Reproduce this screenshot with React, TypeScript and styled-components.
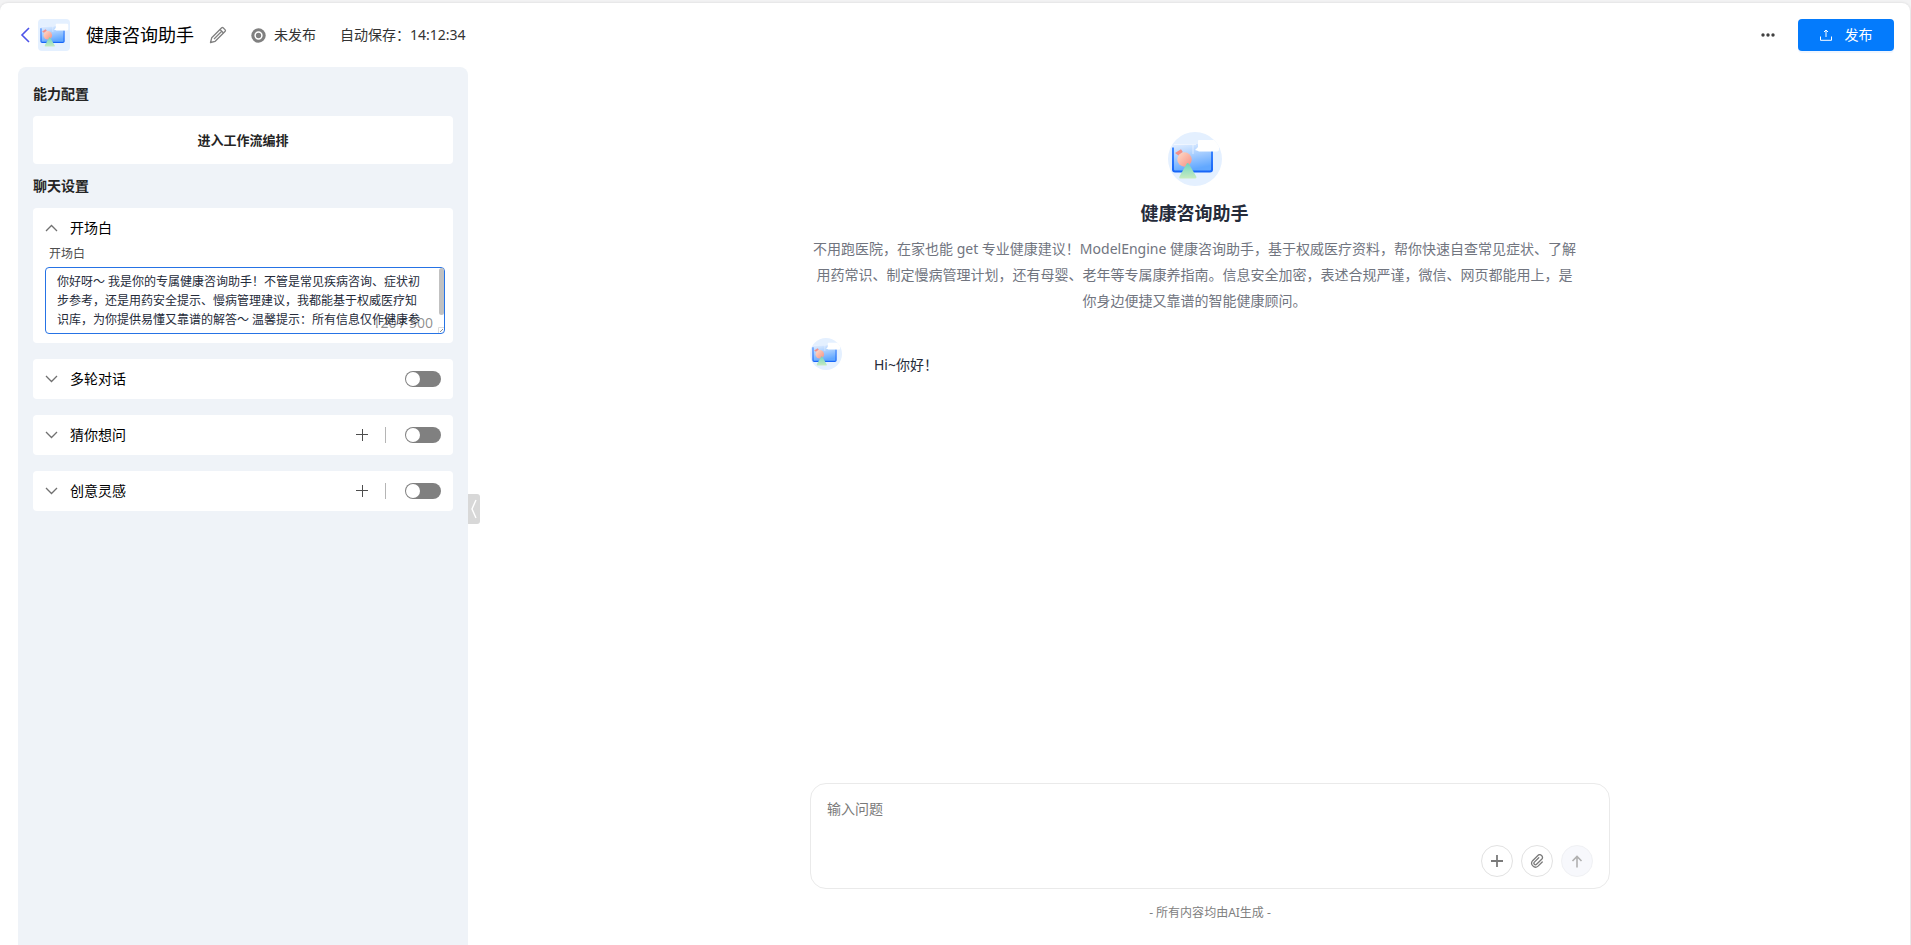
import React, { useState } from 'react';
import styled, { createGlobalStyle } from 'styled-components';

const GlobalStyle = createGlobalStyle`
  *, *::before, *::after { box-sizing: border-box; }
  html, body, #root { height: 100%; }
  body {
    margin: 0;
    background: #f3f3f4;
    color: #000;
    font-family: "Noto Sans", "Noto Sans CJK SC", sans-serif;
    font-size: 14px;
    line-height: 20px;
  }
  button, textarea, input { font: inherit; color: inherit; }
  button { cursor: pointer; border: 0; background: none; padding: 0; }
  h1, h2, p { margin: 0; }
`;

const Page = styled.div`
  min-height: 100%;
  padding: 3px 1px 0 0;
  display: flex;
`;

const Shell = styled.div`
  flex: 1;
  min-width: 0;
  display: flex;
  flex-direction: column;
  background: #fff;
  border-radius: 8px 8px 0 0;
  box-shadow: 0 0 3px rgba(0, 0, 0, 0.12);
`;

const Header = styled.header`
  height: 64px;
  padding: 0 16px 0 20px;
  display: flex;
  align-items: center;
`;

const IconButton = styled.button`
  display: flex;
  align-items: center;
  justify-content: center;
  flex: none;
`;

const BackButton = styled(IconButton)`
  width: 10px;
  height: 32px;
  margin-right: 8px;
`;

const Avatar = styled.span<{ $size: number; $round?: boolean }>`
  width: ${(p) => p.$size}px;
  height: ${(p) => p.$size}px;
  flex: none;
  display: block;
  overflow: hidden;
  border-radius: ${(p) => (p.$round ? '50%' : '4px')};
  svg { display: block; width: 100%; height: 100%; }
`;

const AppName = styled.h1`
  margin: 0 15px 0 16px;
  font-size: 18px;
  line-height: 24px;
  font-weight: 400;
`;

const Status = styled.span`
  margin-left: 24px;
  display: flex;
  align-items: center;
  gap: 8px;
  color: #333;
`;

const SavedAt = styled.span`
  margin-left: 24px;
  color: #333;
`;

const HeaderActions = styled.div`
  margin-left: auto;
  display: flex;
  align-items: center;
  gap: 22px;
`;

const PublishButton = styled.button`
  width: 96px;
  height: 32px;
  border-radius: 4px;
  background: #047bfc;
  color: #fff;
  box-shadow: 0 2px 0 rgba(5, 95, 255, 0.06);
  display: flex;
  align-items: center;
  justify-content: center;
  gap: 13px;
`;

const Body = styled.div`
  flex: 1;
  display: flex;
  padding-left: 18px;
`;

const Sidebar = styled.aside`
  position: relative;
  width: 450px;
  flex: none;
  padding: 17px 15px;
  border-radius: 8px 8px 0 0;
  background: #eff3f8;
`;

const SectionTitle = styled.h2`
  margin-bottom: 12px;
  font-size: 14px;
  line-height: 20px;
  font-weight: 600;
  color: #252525;
`;

const WorkflowButton = styled.button`
  width: 100%;
  height: 48px;
  margin-bottom: 12px;
  border-radius: 4px;
  background: #fff;
  font-size: 13px;
  font-weight: 600;
  color: #252525;
`;

const SettingList = styled.div`
  display: flex;
  flex-direction: column;
  gap: 16px;
`;

const Card = styled.section<{ $open?: boolean }>`
  padding: 0 12px ${(p) => (p.$open ? 9 : 0)}px;
  border-radius: 4px;
  background: #fff;
`;

const CardHead = styled.div`
  height: 40px;
  display: flex;
  align-items: center;
`;

const CardToggle = styled.button`
  display: flex;
  align-items: center;
  gap: 12px;
  margin-right: auto;
`;

const AddButton = styled(IconButton)`
  width: 12px;
  height: 12px;
`;

const Divider = styled.span`
  width: 1px;
  height: 16px;
  margin: 0 19px 0 17px;
  background: #b5b5b5;
`;

const Switch = styled.input`
  appearance: none;
  width: 36px;
  height: 16px;
  margin: 0;
  border-radius: 8px;
  background: #808080;
  cursor: pointer;
  display: flex;
  align-items: center;
  padding: 0 1px;
  &::before {
    content: '';
    width: 14px;
    height: 14px;
    border-radius: 50%;
    background: #fff;
  }
  &:checked { background: #047bfc; justify-content: flex-end; }
`;

const FieldLabel = styled.label`
  display: block;
  padding-left: 4px;
  margin-bottom: 8px;
  font-size: 12px;
  line-height: 11px;
  color: #4d4d4d;
`;

const GreetingBox = styled.div`
  position: relative;
  width: 400px;
  height: 67px;
  padding-bottom: 3px;
  border: 1px solid #2673e5;
  border-radius: 4px;
  background: #fff;
`;

const GreetingArea = styled.textarea`
  display: block;
  width: 100%;
  height: 100%;
  padding: 4px 22px 0 11px;
  border: 0;
  outline: none;
  resize: none;
  overflow: hidden;
  background: none;
  font-size: 12px;
  line-height: 19px;
  color: #252b3a;
`;

const ScrollThumb = styled.span`
  position: absolute;
  top: 0;
  right: 0;
  width: 5px;
  height: 47px;
  border-radius: 3px;
  background: #c1c1c1;
`;

const ResizeGrip = styled.svg`
  position: absolute;
  right: 0;
  bottom: 0;
`;

const CharCount = styled.span`
  position: absolute;
  right: 11px;
  bottom: 0;
  color: rgba(0, 0, 0, 0.45);
  pointer-events: none;
`;

const CollapseHandle = styled.button`
  position: absolute;
  left: 100%;
  top: 427px;
  width: 12px;
  height: 30px;
  border-radius: 0 3px 3px 0;
  background: #d8d8d8;
  display: flex;
  align-items: center;
  justify-content: center;
`;

const Chat = styled.main`
  flex: 1;
  min-width: 0;
  padding: 65px 0 22px 42px;
  display: flex;
  flex-direction: column;
  align-items: center;
`;

const Conversation = styled.div`
  flex: 1;
  width: 100%;
  max-width: 800px;
  padding-right: 31px;
`;

const Intro = styled.div`
  display: flex;
  flex-direction: column;
  align-items: center;
  text-align: center;
`;

const IntroTitle = styled.h2`
  margin: 15px 0 11px;
  font-size: 18px;
  line-height: 24px;
  font-weight: 700;
  color: #252b3a;
`;

const IntroText = styled.p`
  line-height: 26px;
  color: #71757f;
`;

const Message = styled.div`
  margin-top: 24px;
  display: flex;
  align-items: flex-start;
  gap: 32px;
`;

const Bubble = styled.p`
  padding-top: 17px;
  color: #252b3a;
`;

const Composer = styled.form`
  width: 100%;
  max-width: 800px;
  height: 106px;
  padding: 15px 16px 11px;
  border: 1px solid #eaeaea;
  border-radius: 16px;
  display: flex;
  flex-direction: column;
  justify-content: space-between;
`;

const Question = styled.textarea`
  width: 100%;
  height: 40px;
  padding: 0;
  border: 0;
  outline: none;
  resize: none;
  background: none;
  color: #252b3a;
  &::placeholder { color: #7a7a7a; }
`;

const ComposerActions = styled.div`
  display: flex;
  justify-content: flex-end;
  gap: 8px;
`;

const RoundButton = styled(IconButton)<{ $muted?: boolean }>`
  width: 32px;
  height: 32px;
  border-radius: 50%;
  border: 1px solid ${(p) => (p.$muted ? '#f0f1f4' : '#e2e2e2')};
  background: ${(p) => (p.$muted ? '#f7f8fc' : '#fff')};
`;

const Notice = styled.p`
  margin-top: 14px;
  font-size: 12px;
  line-height: 20px;
  color: #808080;
`;

function BotPicture({ id }: { id: string }) {
  return (
    <svg viewBox="0 0 54 54" aria-hidden="true">
      <defs>
        <linearGradient id={`${id}-screen`} x1="0" y1="0" x2="0.3" y2="1">
          <stop offset="0" stopColor="#e6f0ff" />
          <stop offset="0.4" stopColor="#b4d5ff" />
          <stop offset="1" stopColor="#62a8ff" />
        </linearGradient>
        <linearGradient id={`${id}-edge`} x1="0" y1="0" x2="0" y2="1">
          <stop offset="0" stopColor="#3f88ff" />
          <stop offset="1" stopColor="#1766f8" />
        </linearGradient>
        <linearGradient id={`${id}-ball`} x1="0" y1="0" x2="1" y2="1">
          <stop offset="0" stopColor="#ffdcc8" />
          <stop offset="1" stopColor="#f58f84" />
        </linearGradient>
        <linearGradient id={`${id}-cone`} x1="0" y1="0" x2="0" y2="1">
          <stop offset="0" stopColor="#6fd3c0" />
          <stop offset="1" stopColor="#c8ecc0" />
        </linearGradient>
      </defs>
      <rect width="54" height="54" fill="#e4f0ff" />
      <path d="M5 12H44V39H5Z" fill={`url(#${id}-screen)`} />
      <path d="M5 15.500V37.500Q5 39.500 7 39.500H42Q44 39.500 44 37.500V19" fill="none" stroke={`url(#${id}-edge)`} strokeWidth="2" />
      <path d="M6 12.500H28M25 12.500V22" fill="none" stroke="#fff" strokeWidth="0.800" opacity="0.700" />
      <path d="M31 8H49Q51 8 51 10V17.500Q51 19.500 49 19.500H31Q30 18.500 27 18L30 15V9Q30 8 31 8Z" fill="#fff" />
      <path d="M7 21L13 17.300L14.800 20L10.500 23.500Z" fill="#f58f88" />
      <circle cx="16.500" cy="27.500" r="7.200" fill={`url(#${id}-ball)`} />
      <path d="M18.500 32Q19.700 30 21 32L28.500 45Q28.500 46.500 27 46.500H12.500Q10.500 46.500 11.500 44.500Z" fill={`url(#${id}-cone)`} />
    </svg>
  );
}

function Chevron({ up }: { up?: boolean }) {
  return (
    <svg width="13" height="8" viewBox="0 0 13 8" fill="none" stroke="#707070" strokeWidth="1.3" aria-hidden="true">
      <path d={up ? 'M1 7L6.500 1.500L12 7' : 'M1 1L6.500 6.500L12 1'} />
    </svg>
  );
}

function SettingCard({ title, addable }: { title: string; addable?: boolean }) {
  return (
    <Card>
      <CardHead>
        <CardToggle type="button" aria-expanded="false">
          <Chevron />
          {title}
        </CardToggle>
        {addable && (
          <>
            <AddButton type="button" aria-label={`添加${title}`}>
              <svg width="12" height="12" viewBox="0 0 12 12" stroke="#4d4d4d" fill="none">
                <path d="M0 5.500H12M6.500 0V12" />
              </svg>
            </AddButton>
            <Divider />
          </>
        )}
        <Switch type="checkbox" role="switch" aria-label={title} />
      </CardHead>
    </Card>
  );
}

const MAX_GREETING = 500;

const GREETING =
  '你好呀～ 我是你的专属健康咨询助手！不管是常见疾病咨询、症状初步参考，还是用药安全提示、慢病管理建议，我都能基于权威医疗知识库，为你提供易懂又靠谱的解答～ 温馨提示：所有信息仅作健康参考，不能替代专业医生的诊断和治疗，身体不适请及时就医哦！';

export default function App() {
  const [greeting, setGreeting] = useState(GREETING);
  return (
    <>
      <GlobalStyle />
      <Page>
        <Shell>
          <Header>
            <BackButton type="button" aria-label="返回">
              <svg width="10" height="16" viewBox="0 0 10 16" fill="none" stroke="#4d53e8" strokeWidth="1.6">
                <path d="M9 1L2 8L9 15" />
              </svg>
            </BackButton>
            <Avatar $size={32}>
              <BotPicture id="head" />
            </Avatar>
            <AppName>健康咨询助手</AppName>
            <IconButton type="button" aria-label="编辑">
              <svg width="18" height="18" viewBox="0 0 18 18" fill="none" stroke="#808080" strokeWidth="1.3" strokeLinejoin="round">
                <path d="M1.500 16.500L2.700 11.800L12.700 1.800Q13.400 1.200 14.100 1.800L16.200 3.900Q16.800 4.600 16.200 5.300L6.200 15.300Z" />
                <path d="M11 3.500L14.500 7M12.500 5.500L5 13" />
              </svg>
            </IconButton>
            <Status>
              <svg width="15" height="15" viewBox="0 0 15 15" aria-hidden="true">
                <circle cx="7.500" cy="7.500" r="7.200" fill="#808080" />
                <circle cx="7.500" cy="7.500" r="3.400" fill="none" stroke="#fff" strokeWidth="1.500" />
              </svg>
              未发布
            </Status>
            <SavedAt>自动保存：14:12:34</SavedAt>
            <HeaderActions>
              <IconButton type="button" aria-label="更多">
                <svg width="16" height="16" viewBox="0 0 16 16" fill="#404040">
                  <circle cx="3" cy="8" r="1.700" />
                  <circle cx="8" cy="8" r="1.700" />
                  <circle cx="13" cy="8" r="1.700" />
                </svg>
              </IconButton>
              <PublishButton type="button">
                <svg width="12" height="12" viewBox="0 0 12 12" fill="none" stroke="#fff" aria-hidden="true">
                  <path d="M0.500 7.500V11.300H11.500V7.500M6 8V1M4 3L6 1L8 3" />
                </svg>
                发布
              </PublishButton>
            </HeaderActions>
          </Header>
          <Body>
            <Sidebar>
              <SectionTitle>能力配置</SectionTitle>
              <WorkflowButton type="button">进入工作流编排</WorkflowButton>
              <SectionTitle>聊天设置</SectionTitle>
              <SettingList>
                <Card $open>
                  <CardHead>
                    <CardToggle type="button" aria-expanded="true">
                      <Chevron up />
                      开场白
                    </CardToggle>
                  </CardHead>
                  <FieldLabel htmlFor="greeting">开场白</FieldLabel>
                  <GreetingBox>
                    <CharCount>
                      {greeting.length} / {MAX_GREETING}
                    </CharCount>
                    <GreetingArea
                      id="greeting"
                      maxLength={MAX_GREETING}
                      value={greeting}
                      onChange={(e) => setGreeting(e.target.value)}
                    />
                    <ScrollThumb />
                    <ResizeGrip width="6" height="6" viewBox="0 0 6 6" fill="none" stroke="#909090" aria-hidden="true">
                      <path d="M0.500 6V0.500H6" stroke="#dcdcdc" />
                      <path d="M2 5L5 2" />
                    </ResizeGrip>
                  </GreetingBox>
                </Card>
                <SettingCard title="多轮对话" />
                <SettingCard title="猜你想问" addable />
                <SettingCard title="创意灵感" addable />
              </SettingList>
              <CollapseHandle type="button" aria-label="收起">
                <svg width="6" height="20" viewBox="0 0 6 20" fill="none" stroke="#fff" strokeWidth="1.400">
                  <path d="M5 1L1 10L5 19" />
                </svg>
              </CollapseHandle>
            </Sidebar>
            <Chat>
              <Conversation>
                <Intro>
                  <Avatar $size={54} $round>
                    <BotPicture id="intro" />
                  </Avatar>
                  <IntroTitle>健康咨询助手</IntroTitle>
                  <IntroText>
                    不用跑医院，在家也能 get 专业健康建议！ModelEngine
                    健康咨询助手，基于权威医疗资料，帮你快速自查常见症状、了解用药常识、制定慢病管理计划，还有母婴、老年等专属康养指南。信息安全加密，表述合规严谨，微信、网页都能用上，是你身边便捷又靠谱的智能健康顾问。
                  </IntroText>
                </Intro>
                <Message>
                  <Avatar $size={32} $round>
                    <BotPicture id="message" />
                  </Avatar>
                  <Bubble>Hi~你好！</Bubble>
                </Message>
              </Conversation>
              <Composer>
                <Question placeholder="输入问题" aria-label="输入问题" />
                <ComposerActions>
                  <RoundButton type="button" aria-label="添加">
                    <svg width="12" height="12" viewBox="0 0 12 12" stroke="#7a7a7a" strokeWidth="1.800">
                      <path d="M0 6H12M6 0V12" />
                    </svg>
                  </RoundButton>
                  <RoundButton type="button" aria-label="附件">
                    <svg width="14" height="14" viewBox="0 0 24 24" fill="none" stroke="#7a7a7a" strokeWidth="2.200" strokeLinecap="round">
                      <path d="M15 6.500L7.500 14A2.600 2.600 0 0 0 11.200 17.700L20 9A4.600 4.600 0 0 0 13.500 2.500L4.500 11.500A6.600 6.600 0 0 0 13.800 20.800L21 13.600" />
                    </svg>
                  </RoundButton>
                  <RoundButton type="submit" $muted aria-label="发送">
                    <svg width="12" height="13" viewBox="0 0 12 13" fill="none" stroke="#b0b0b0" strokeWidth="1.600">
                      <path d="M6 12.500V1.500M1.500 6L6 1.500L10.500 6" />
                    </svg>
                  </RoundButton>
                </ComposerActions>
              </Composer>
              <Notice>- 所有内容均由AI生成 -</Notice>
            </Chat>
          </Body>
        </Shell>
      </Page>
    </>
  );
}
